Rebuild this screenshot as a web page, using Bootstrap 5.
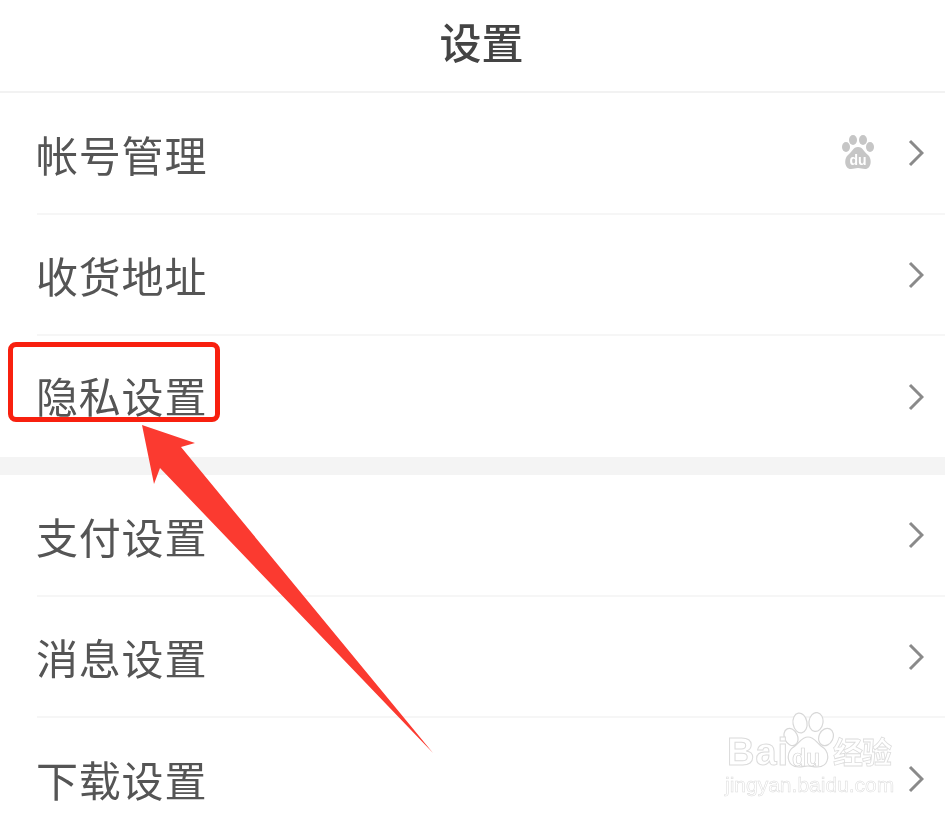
<!DOCTYPE html>
<html lang="zh-CN">
<head>
  <meta charset="UTF-8" />
  <meta name="viewport" content="width=device-width, initial-scale=1.0"/>
  <title>设置</title>
  <link rel="stylesheet" href="https://cdn.jsdelivr.net/npm/bootstrap@5.3.0/dist/css/bootstrap.min.css">
  <style>
    html, body { height: 815px; overflow: hidden; }
    body { font-family: "Liberation Sans", "Noto Sans CJK SC", sans-serif; background: #fff; position: relative; }
    .top-title { height: 93px; border-bottom: 2px solid #f2f2f2; font-size: 42px; font-weight: 500; color: #444; line-height: 1; padding-left: 18px; padding-bottom: 2px; }
    .top-title span { filter: blur(0.6px); }
    .set-row { height: 121px; margin-left: 37px; padding-right: 21px; border-bottom: 2px solid #f6f6f6; color: #555; font-size: 42px; line-height: 1; }
    .set-row span { letter-spacing: 0.8px; filter: blur(0.7px); padding-top: 9px; margin-left: -1px; }
    .set-row.no-line { border-bottom: 0; }
    .set-row.tall { height: 122px; }
    .set-row.boxed span { padding-top: 5px; }
    .group-gap { height: 18px; background: #f4f4f4; }
    .chev { width: 16px; height: 28px; flex: none; filter: blur(0.6px); }
    .paw { width: 34px; height: 38px; filter: blur(0.6px); margin-right: 33px; }
    .mark-box { position: absolute; left: 8px; top: 342px; width: 212px; height: 80px; border: 5px solid #f8200f; border-radius: 8px; }
    .mark-arrow { position: absolute; left: 0; top: 0; width: 945px; height: 815px; pointer-events: none; }
    .wm { position: absolute; left: 724px; top: 712px; width: 175px; height: 90px; color: #fff; filter: blur(0.4px); }
    .wm-baidu { position: absolute; left: 3px; top: 21px; font-size: 38px; font-weight: 700; line-height: 1; -webkit-text-stroke: 1px #dcdcdc; letter-spacing: 1px; }
    .wm-du { position: absolute; left: 68px; top: 35px; font-size: 23px; font-weight: 700; line-height: 1; color: #fff; -webkit-text-stroke: 0.7px #d6d6d6; }
    .wm-jy { position: absolute; left: 109px; top: 26px; font-size: 30px; font-weight: 700; line-height: 1; letter-spacing: -1px; -webkit-text-stroke: 0.8px #dcdcdc; }
    .wm-url { position: absolute; left: 1px; top: 62px; font-size: 21px; line-height: 1; color: #fff; white-space: nowrap; -webkit-text-stroke: 0.5px #dadada; }
    .wm-paw { position: absolute; left: 59px; top: 0; width: 51px; height: 57px; }
  </style>
</head>
<body>
  <div class="top-title d-flex align-items-center justify-content-center"><span>设置</span></div>

  <div class="set-row tall d-flex align-items-center justify-content-between">
    <span>帐号管理</span>
    <div class="d-flex align-items-center">
      <svg class="paw" viewBox="0 0 34 38" fill="#c6c6c6">
        <ellipse cx="12" cy="6" rx="4" ry="5"/>
        <ellipse cx="22" cy="6" rx="4" ry="5"/>
        <ellipse cx="5" cy="13" rx="4" ry="5"/>
        <ellipse cx="29" cy="13" rx="4" ry="5"/>
        <path d="M17 13c5 0 6 5 10 8 4 3 4 14-3 14-3 0-4-1-7-1s-4 1-7 1c-7 0-7-11-3-14 4-3 5-8 10-8z"/>
        <text x="17" y="31" font-size="14" font-weight="700" text-anchor="middle" fill="#fff" font-family="Liberation Sans">du</text>
      </svg>
      <svg class="chev" viewBox="0 0 16 28"><path d="M2 2l12 12L2 26" fill="none" stroke="#8a8a8a" stroke-width="3"/></svg>
    </div>
  </div>
  <div class="set-row d-flex align-items-center justify-content-between">
    <span>收货地址</span>
    <svg class="chev" viewBox="0 0 16 28"><path d="M2 2l12 12L2 26" fill="none" stroke="#8a8a8a" stroke-width="3"/></svg>
  </div>
  <div class="set-row boxed no-line d-flex align-items-center justify-content-between">
    <span>隐私设置</span>
    <svg class="chev" viewBox="0 0 16 28"><path d="M2 2l12 12L2 26" fill="none" stroke="#8a8a8a" stroke-width="3"/></svg>
  </div>

  <div class="group-gap"></div>

  <div class="set-row tall d-flex align-items-center justify-content-between">
    <span>支付设置</span>
    <svg class="chev" viewBox="0 0 16 28"><path d="M2 2l12 12L2 26" fill="none" stroke="#8a8a8a" stroke-width="3"/></svg>
  </div>
  <div class="set-row d-flex align-items-center justify-content-between">
    <span>消息设置</span>
    <svg class="chev" viewBox="0 0 16 28"><path d="M2 2l12 12L2 26" fill="none" stroke="#8a8a8a" stroke-width="3"/></svg>
  </div>
  <div class="set-row no-line d-flex align-items-center justify-content-between">
    <span>下载设置</span>
    <svg class="chev" viewBox="0 0 16 28"><path d="M2 2l12 12L2 26" fill="none" stroke="#8a8a8a" stroke-width="3"/></svg>
  </div>

  <div class="mark-box"></div>
  <svg class="mark-arrow" viewBox="0 0 945 815">
    <path d="M142 425L195 443 181 447 433 753 160 468 154 484z" fill="#fb3a30"/>
  </svg>

  <div class="wm">
    <svg class="wm-paw" viewBox="0 0 51 57" fill="#fff" stroke="#d8d8d8" stroke-width="1.2">
      <ellipse cx="17" cy="11" rx="7" ry="10" transform="rotate(-10 17 11)"/>
      <ellipse cx="33" cy="10" rx="7" ry="9.5" transform="rotate(8 33 10)"/>
      <ellipse cx="8" cy="25" rx="6.5" ry="9" transform="rotate(-25 8 25)"/>
      <ellipse cx="43" cy="25" rx="7" ry="9" transform="rotate(25 43 25)"/>
      <path d="M25 25c6 0 8 5 13 9 10 6 9 21-4 21-4 0-6-1-9-1s-5 1-9 1C3 55 2 40 12 34c5-4 7-9 13-9z"/>
    </svg>
    <div class="wm-baidu">Bai</div>
    <div class="wm-du">du</div>
    <div class="wm-jy">经验</div>
    <div class="wm-url">jingyan.baidu.com</div>
  </div>
</body>
</html>
